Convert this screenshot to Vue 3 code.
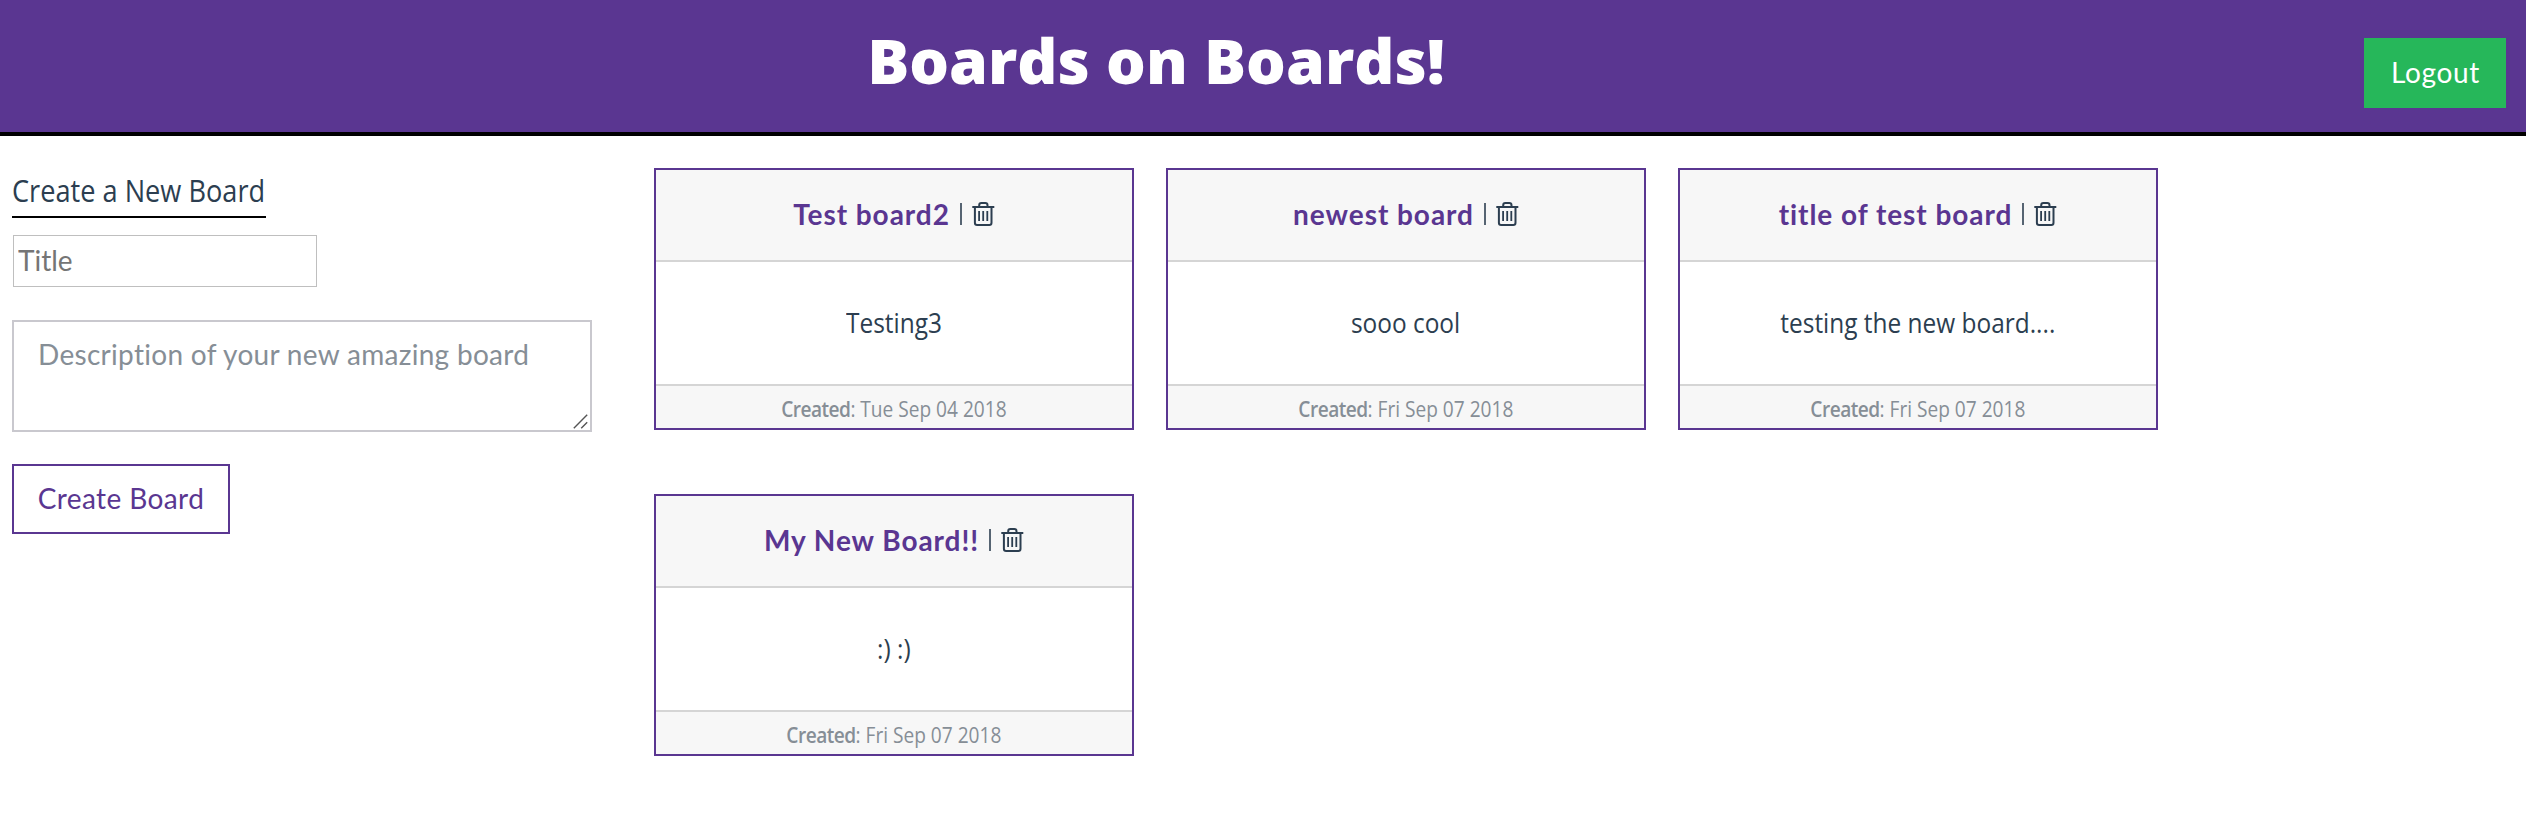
<script setup>
import { ref } from 'vue'

const title = ref('')
const description = ref('')
const boards = ref([
  { title: 'Test board2', body: 'Testing3', created: 'Tue Sep 04 2018' },
  { title: 'newest board', body: 'sooo cool', created: 'Fri Sep 07 2018' },
  { title: 'title of test board', body: 'testing the new board....', created: 'Fri Sep 07 2018' },
  { title: 'My New Board!!', body: ':) :)', created: 'Fri Sep 07 2018' },
])
</script>

<template>
  <div class="app">
    <header class="header">
      <h1 class="brand">Boards on Boards!</h1>
      <div class="account"><button class="logout">Logout</button></div>
    </header>
    <main class="main">
      <form class="create" @submit.prevent>
        <h2 class="create-heading"><span class="narrow">Create a New Board</span></h2>
        <input v-model="title" class="title-input" placeholder="Title" />
        <div class="description">
          <textarea v-model="description" class="description-input" placeholder="Description of your new amazing board"></textarea>
          <svg class="grip" viewBox="0 0 15 15"><path d="M.8 14.2 14.2.8M8.2 14.2l6-6" /></svg>
        </div>
        <button class="submit">Create Board</button>
      </form>
      <section class="boards">
        <article v-for="board in boards" :key="board.title" class="card">
          <div class="card-header">
            <a class="card-title">{{ board.title }}</a>
            <span class="divider"></span>
            <svg class="trash" viewBox="0 0 23 24">
              <path d="M.3 4.9h22M7.2 4.7V3.2Q7.2 1 9.4 1h3.9q2.2 0 2.2 2.2v1.5M2.9 5v15.8q0 2.2 2.2 2.2h12.2q2.2 0 2.2-2.2V5" />
              <path class="bars" d="M7.1 9v10M11.2 9v10M15.3 9v10" />
            </svg>
          </div>
          <div class="card-body"><span class="narrow">{{ board.body }}</span></div>
          <footer class="card-footer"><span class="narrow"><b>Created</b>: {{ board.created }}</span></footer>
        </article>
      </section>
    </main>
  </div>
</template>

<style>
body {
  margin: 0;
  background: #fff;
}
</style>

<style scoped>
.app {
  min-height: 820px;
  color: #2c3e50;
  font-family: "Open Sans", sans-serif;
}
.narrow {
  display: inline-block;
  white-space: nowrap;
  transform: scaleX(0.888);
}
.header {
  display: flex;
  box-sizing: border-box;
  height: 136px;
  background: #5a3691;
  border-bottom: 4px solid #000;
}
.brand {
  flex: 1;
  margin: 0;
  padding-top: 18px;
  color: #fff;
  font-size: 62.5px;
  font-weight: 800;
  line-height: 84px;
  text-align: center;
}
.account {
  width: 214px;
  padding-top: 38px;
}
button,
input,
textarea {
  box-sizing: border-box;
  margin: 0;
  border-radius: 0;
  font-family: Lato, sans-serif;
  font-size: 28px;
  outline: none;
}
.logout {
  display: block;
  width: 142px;
  height: 70px;
  margin-left: 52px;
  padding: 0 0 3px 1px;
  background: #26b75a;
  border: 0;
  color: #fff;
  letter-spacing: 0.7px;
}
.main {
  display: flex;
  align-items: flex-start;
}
.create {
  display: flex;
  flex-direction: column;
  align-items: flex-start;
  width: 580px;
  padding: 34px 62px 0 12px;
}
.create-heading {
  width: 254px;
  margin: 0;
  padding-bottom: 5px;
  border-bottom: 2px solid #000;
  font-size: 31px;
  font-weight: 400;
  line-height: 41px;
}
.create-heading .narrow {
  transform: scaleX(0.876);
  transform-origin: left;
}
.title-input {
  width: 304px;
  height: 52px;
  margin: 17px 0 0 1px;
  padding: 0 4px 2px;
  border: 1px solid #bfbfbf;
}
.title-input::placeholder {
  color: #757575;
  opacity: 1;
}
.description {
  position: relative;
  margin-top: 33px;
}
.description-input {
  display: block;
  width: 580px;
  height: 112px;
  padding: 12px 24px;
  border: 2px solid #c9c8ce;
  letter-spacing: 0.3px;
  line-height: 40px;
  resize: none;
  overflow: hidden;
}
.description-input::placeholder {
  color: #868e96;
  opacity: 1;
}
.grip {
  position: absolute;
  right: 4px;
  bottom: 3px;
  width: 15px;
  height: 15px;
  fill: none;
  stroke: #555;
  stroke-width: 1.4;
}
.submit {
  width: 218px;
  height: 70px;
  margin-top: 32px;
  padding: 0 0 3px;
  background: #fff;
  border: 2px solid #5a3691;
  color: #5a3691;
  letter-spacing: 0.4px;
}
.boards {
  display: grid;
  grid-template-columns: repeat(3, 480px);
  gap: 64px 32px;
  padding-top: 32px;
}
.card {
  box-sizing: border-box;
  height: 262px;
  border: 2px solid #5a3691;
  text-align: center;
}
.card-header {
  display: flex;
  justify-content: center;
  box-sizing: border-box;
  height: 92px;
  padding-top: 32px;
  background: #f7f7f7;
  border-bottom: 2px solid #d5d5d5;
}
.card-title {
  color: #5a3691;
  font-family: Lato, sans-serif;
  font-size: 28px;
  font-weight: 700;
  letter-spacing: 0.95px;
  line-height: 24px;
}
.divider {
  width: 2px;
  height: 22px;
  margin: 1px 10px 0;
  background: #566472;
}
.trash {
  width: 23px;
  height: 24px;
  fill: none;
  stroke: #2c3e50;
  stroke-width: 2;
}
.bars {
  stroke-width: 1.8;
}
.card-body {
  height: 122px;
  font-size: 27.5px;
  line-height: 121px;
}
.card-footer {
  box-sizing: border-box;
  height: 44px;
  background: #f7f7f7;
  border-top: 2px solid #d5d5d5;
  color: #868e96;
  font-size: 22px;
  line-height: 44px;
}
.card-footer .narrow {
  transform: scaleX(0.868);
}
.card-footer b {
  font-weight: 600;
  letter-spacing: -0.6px;
}
</style>
